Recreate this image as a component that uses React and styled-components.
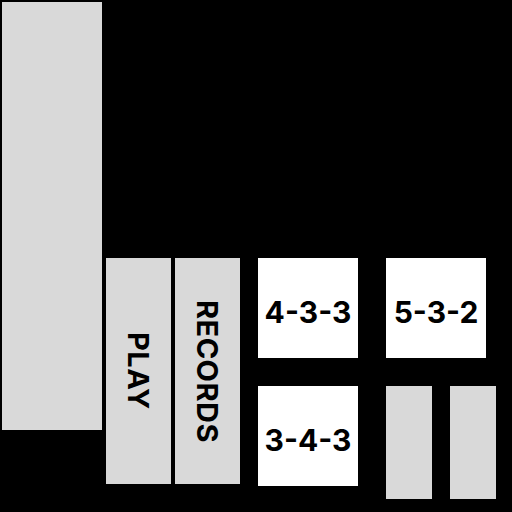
import React from 'react';
import styled, { createGlobalStyle } from 'styled-components';

const GlobalStyle = createGlobalStyle`
  html, body {
    margin: 0;
    padding: 0;
    background: #000000;
  }
  body {
    font-family: Inter, "Liberation Sans", sans-serif;
  }
`;

const Page = styled.div`
  display: flex;
  align-items: flex-start;
  width: 512px;
  height: 512px;
  padding: 2px;
  box-sizing: border-box;
  overflow: hidden;
  background: #000000;
`;

const Sidebar = styled.div`
  width: 100px;
  height: 428px;
  flex-shrink: 0;
  background: #d9d9d9;
`;

const Main = styled.div`
  display: flex;
  align-items: flex-start;
  margin: 256px 0 0 4px;
`;

const Tabs = styled.div`
  display: flex;
  gap: 4px;
`;

const Tab = styled.div`
  width: 65px;
  height: 226px;
  display: flex;
  align-items: center;
  justify-content: center;
  background: #d9d9d9;
  color: #000000;
`;

const TabLabel = styled.span`
  writing-mode: vertical-rl;
  font-size: 29px;
  font-weight: 700;
  letter-spacing: 0.5px;
  line-height: 1;
`;

const Formations = styled.div`
  display: grid;
  grid-template-columns: 100px 100px;
  grid-auto-rows: 100px;
  gap: 28px;
  margin-left: 18px;
`;

const Formation = styled.div`
  display: flex;
  align-items: center;
  justify-content: center;
  padding-top: 8px;
  box-sizing: border-box;
  background: #ffffff;
  color: #000000;
  font-size: 30px;
  font-weight: 700;
`;

const Slots = styled.div`
  display: flex;
  gap: 18px;
`;

const Slot = styled.div`
  width: 46px;
  height: 113px;
  flex-shrink: 0;
  background: #d9d9d9;
`;

const formations = ['4-3-3', '5-3-2', '3-4-3'];

export default function App() {
  return (
    <>
      <GlobalStyle />
      <Page>
        <Sidebar />
        <Main>
          <Tabs>
            <Tab><TabLabel>PLAY</TabLabel></Tab>
            <Tab><TabLabel>RECORDS</TabLabel></Tab>
          </Tabs>
          <Formations>
            {formations.map((f) => (
              <Formation key={f}>{f}</Formation>
            ))}
            <Slots>
              <Slot />
              <Slot />
            </Slots>
          </Formations>
        </Main>
      </Page>
    </>
  );
}
